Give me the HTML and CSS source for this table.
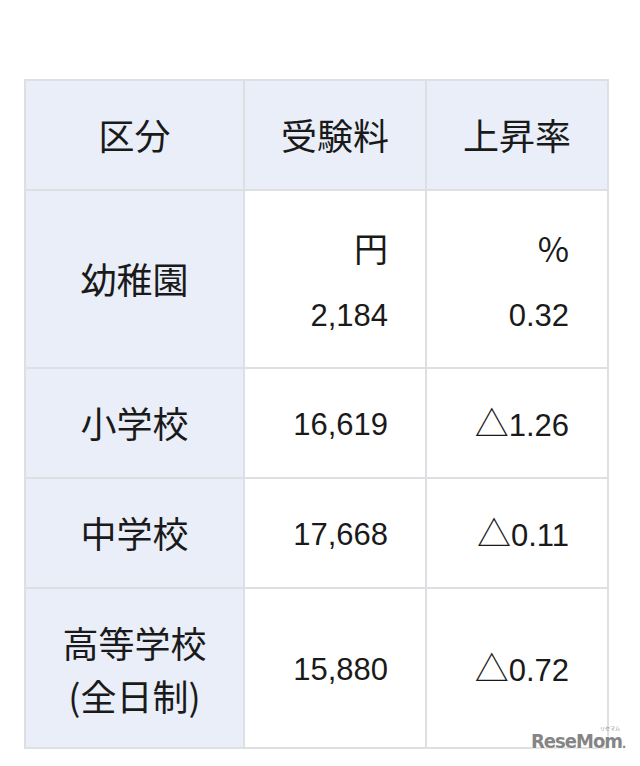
FILE: index.html
```html
<!DOCTYPE html>
<html lang="ja">
<head>
<meta charset="utf-8">
<title>受験料</title>
<link rel="stylesheet" href="styles.css">
</head>
<body>
<div class="page">
  <table class="fee">
    <colgroup>
      <col class="c1"><col class="c2"><col class="c3">
    </colgroup>
    <thead>
      <tr class="r-head">
        <th>区分</th>
        <th>受験料</th>
        <th>上昇率</th>
      </tr>
    </thead>
    <tbody>
      <tr class="r-tall">
        <th>幼稚園</th>
        <td><div class="stack"><span class="unit">円</span><span>2,184</span></div></td>
        <td><div class="stack"><span class="unit">%</span><span>0.32</span></div></td>
      </tr>
      <tr class="r-std">
        <th>小学校</th>
        <td>16,619</td>
        <td><span class="tri">△</span>1.26</td>
      </tr>
      <tr class="r-std">
        <th>中学校</th>
        <td>17,668</td>
        <td><span class="tri">△</span>0.11</td>
      </tr>
      <tr class="r-last">
        <th><div class="two">高等学校<br>(全日制)</div></th>
        <td>15,880</td>
        <td><span class="tri">△</span>0.72</td>
      </tr>
    </tbody>
  </table>
  <div class="logo"><span class="kana">リセマム</span>ReseMom<span class="dot">.</span></div>
</div>
</body>
</html>
```

FILE: styles.css
```css
html, body {
  margin: 0;
  padding: 0;
  background: #ffffff;
}
.page {
  position: relative;
  width: 640px;
  height: 766px;
  padding: 79px 0 0 24px;
  box-sizing: border-box;
}
.fee {
  border-collapse: collapse;
  table-layout: fixed;
  width: 585px;
  color: #1a1a1a;
}
.c1 { width: 219px; }
.c2 { width: 182px; }
.c3 { width: 182px; }
.fee th, .fee td {
  border: 2px solid #dedfe2;
  padding: 0;
}
.fee th {
  background: #e9eef8;
  font-family: "Noto Sans CJK JP", sans-serif;
  font-weight: 400;
  font-size: 36px;
  text-align: center;
  vertical-align: middle;
  line-height: 1.2;
}
.fee td {
  background: #ffffff;
  font-family: "Liberation Sans", "Noto Sans CJK JP", sans-serif;
  font-size: 31px;
  text-align: right;
  vertical-align: middle;
  padding-right: 37px;
  padding-top: 4px;
  line-height: 1.2;
}
.fee td:last-child {
  padding-right: 38px;
}
.r-head { height: 110px; }
.r-tall { height: 178px; }
.r-std { height: 110px; }
.r-last { height: 160px; }
.stack {
  display: flex;
  flex-direction: column;
  align-items: flex-end;
  gap: 30px;
  padding-top: 2px;
}
.unit {
  font-family: "Noto Sans CJK JP", sans-serif;
  font-size: 34px;
  line-height: 38px;
}
.tri {
  font-family: "Noto Sans CJK JP", sans-serif;
  font-size: 34px;
  line-height: 1;
}
.two {
  line-height: 53px;
  padding-top: 2px;
}
.logo {
  position: absolute;
  left: 531px;
  top: 732px;
  font-family: "DejaVu Sans Condensed", "DejaVu Sans", sans-serif;
  font-weight: 700;
  font-size: 20px;
  letter-spacing: -1px;
  color: #858585;
  text-shadow: 0 0 3px #fff, 0 0 3px #fff;
  line-height: 18px;
  white-space: nowrap;
}
.logo .dot {
  font-size: 12px;
  letter-spacing: 0;
}
.logo .kana {
  position: absolute;
  right: 6px;
  top: -7px;
  font-family: "Noto Sans CJK JP", sans-serif;
  font-size: 5px;
  font-weight: 400;
  letter-spacing: 0;
  line-height: 6px;
}
```
